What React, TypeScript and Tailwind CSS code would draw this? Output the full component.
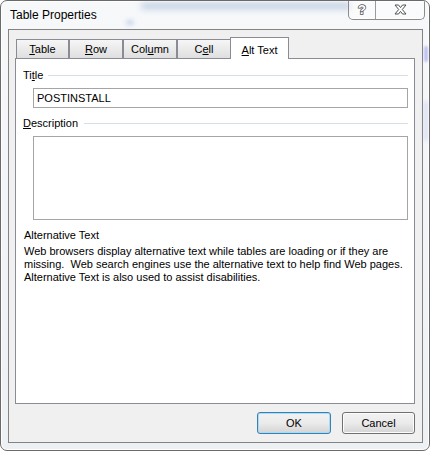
import React from "react";

const font = { fontFamily: '"Liberation Sans", Arial, sans-serif' };

const Tab = ({ label, w }: { label: [string, string, string]; w: string }) => (
    <div
        className={`${w} h-[19px] border border-b-0 border-[#898c95] bg-gradient-to-b from-[#f6f6f6] to-[#dfdfdf] flex items-center justify-center text-[11px] text-black`}
    >
        <span>
            {label[0]}
            <span className="underline underline-offset-[1px]">{label[1]}</span>
            {label[2]}
        </span>
    </div>
);

const Btn = ({ text, primary }: { text: string; primary?: boolean }) => (
    <div
        className={`h-[22px] rounded-[3px] border flex items-center justify-center text-[11px] text-black bg-gradient-to-b from-[#f2f2f2] via-[#ebebeb] to-[#d4d4d4] ${
            primary
                ? "w-[74px] border-[#3c7fb1] shadow-[inset_0_0_0_1px_#a6dcf5]"
                : "w-[73px] border-[#707070] shadow-[inset_0_0_0_1px_#fcfcfc]"
        }`}
    >
        {text}
    </div>
);

export default function App() {
    return (
        <div className="w-[430px] h-[451px] bg-white" style={font}>
            <div className="relative w-full h-full rounded-t-[7px] rounded-b-[7px] border border-[#6a6a6a] bg-gradient-to-b from-[#f6f8fa] to-[#eef1f4] shadow-[inset_0_0_0_1px_rgba(255,255,255,0.9)] flex flex-col overflow-hidden">
                {/* blurred background through glass */}
                <div className="absolute left-[140px] top-[2px] w-[210px] h-[6px] rounded-full bg-[#6f8fbf] opacity-40 blur-[3px]" />
                <div className="absolute left-[125px] top-[19px] w-[8px] h-[5px] rounded-full bg-[#8aa6d6] opacity-40 blur-[2px]" />
                <div className="absolute right-[1px] top-[45px] w-[4px] h-[16px] rounded-full bg-[#8a8ee8] opacity-50 blur-[1px]" />
                <div className="absolute right-[1px] top-[100px] w-[4px] h-[40px] rounded-full bg-[#9aa4e0] opacity-30 blur-[2px]" />

                {/* title bar */}
                <div className="relative h-[28px] flex items-center pl-[9px] shrink-0">
                    <span className="text-[12px] text-black">Table Properties</span>
                    <div className="absolute right-[4px] top-[-1px] h-[20px] flex border border-t-0 border-[#8b8b8b] rounded-b-[5px] bg-white/40 shadow-[inset_0_-1px_0_rgba(255,255,255,0.8)]">
                        <div className="w-[27px] flex items-center justify-center border-r border-[#9a9a9a]">
                            <span className="text-[13px] font-bold text-white [-webkit-text-stroke:1.5px_#505050] [paint-order:stroke_fill]">?</span>
                        </div>
                        <div className="w-[48px] flex items-center justify-center">
                            <svg width="13" height="11" viewBox="0 0 13 11">
                                <path
                                    d="M1 1 H4.5 L6.5 3.6 L8.5 1 H12 L8.3 5.5 L12 10 H8.5 L6.5 7.4 L4.5 10 H1 L4.7 5.5 Z"
                                    fill="#fff"
                                    stroke="#505050"
                                    strokeWidth="1"
                                    strokeLinejoin="round"
                                />
                            </svg>
                        </div>
                    </div>
                </div>

                {/* client area */}
                <div className="flex-1 ml-[7px] mr-[6px] mb-[7px] border border-[#838383] bg-[#f0f0f0] flex flex-col pt-[7px] pl-[6px] pr-[7px]">
                    <div className="relative z-10 h-[21px] flex items-end pl-[1px]">
                        <Tab label={["", "T", "able"]} w="w-[53px]" />
                        <Tab label={["", "R", "ow"]} w="w-[54px]" />
                        <Tab label={["Col", "u", "mn"]} w="w-[54px]" />
                        <Tab label={["C", "e", "ll"]} w="w-[54px]" />
                        <div className="w-[59px] h-[22px] -ml-px -mb-px border border-b-0 border-[#898c95] bg-white flex items-start justify-center pt-[4px] text-[11px] text-black">
                            <span>
                                <span className="underline underline-offset-[1px]">A</span>lt Text
                            </span>
                        </div>
                    </div>

                    <div className="h-[346px] border border-[#898c95] bg-white flex flex-col pt-[9px] pl-[7px] pr-[6px] text-[11px] text-black">
                        <div className="h-[14px] flex items-center">
                            <span>
                                Ti<span className="underline underline-offset-[1px]">t</span>le
                            </span>
                            <div className="flex-1 h-px bg-[#d5dfe5] ml-[5px]" />
                        </div>
                        <div className="mt-[6px] ml-[10px] h-[20px] border border-[#a5a5a5] flex items-center pl-[3px]">
                            POSTINSTALL
                        </div>
                        <div className="mt-[8px] h-[14px] flex items-center">
                            <span>
                                <span className="underline underline-offset-[1px]">D</span>escription
                            </span>
                            <div className="flex-1 h-px bg-[#d5dfe5] ml-[6px]" />
                        </div>
                        <div className="mt-[6px] ml-[10px] h-[84px] border border-[#a5a5a5]" />
                        <div className="mt-[8px] h-[14px] flex items-center pl-[1px]">Alternative Text</div>
                        <p className="mt-[3px] pl-[1px] leading-[13px] whitespace-pre">
                            {"Web browsers display alternative text while tables are loading or if they are\nmissing.  Web search engines use the alternative text to help find Web pages.\nAlternative Text is also used to assist disabilities."}
                        </p>
                    </div>

                    <div className="mt-[8px] flex justify-end gap-[11px]">
                        <Btn text="OK" primary />
                        <Btn text="Cancel" />
                    </div>
                </div>
            </div>
        </div>
    );
}
